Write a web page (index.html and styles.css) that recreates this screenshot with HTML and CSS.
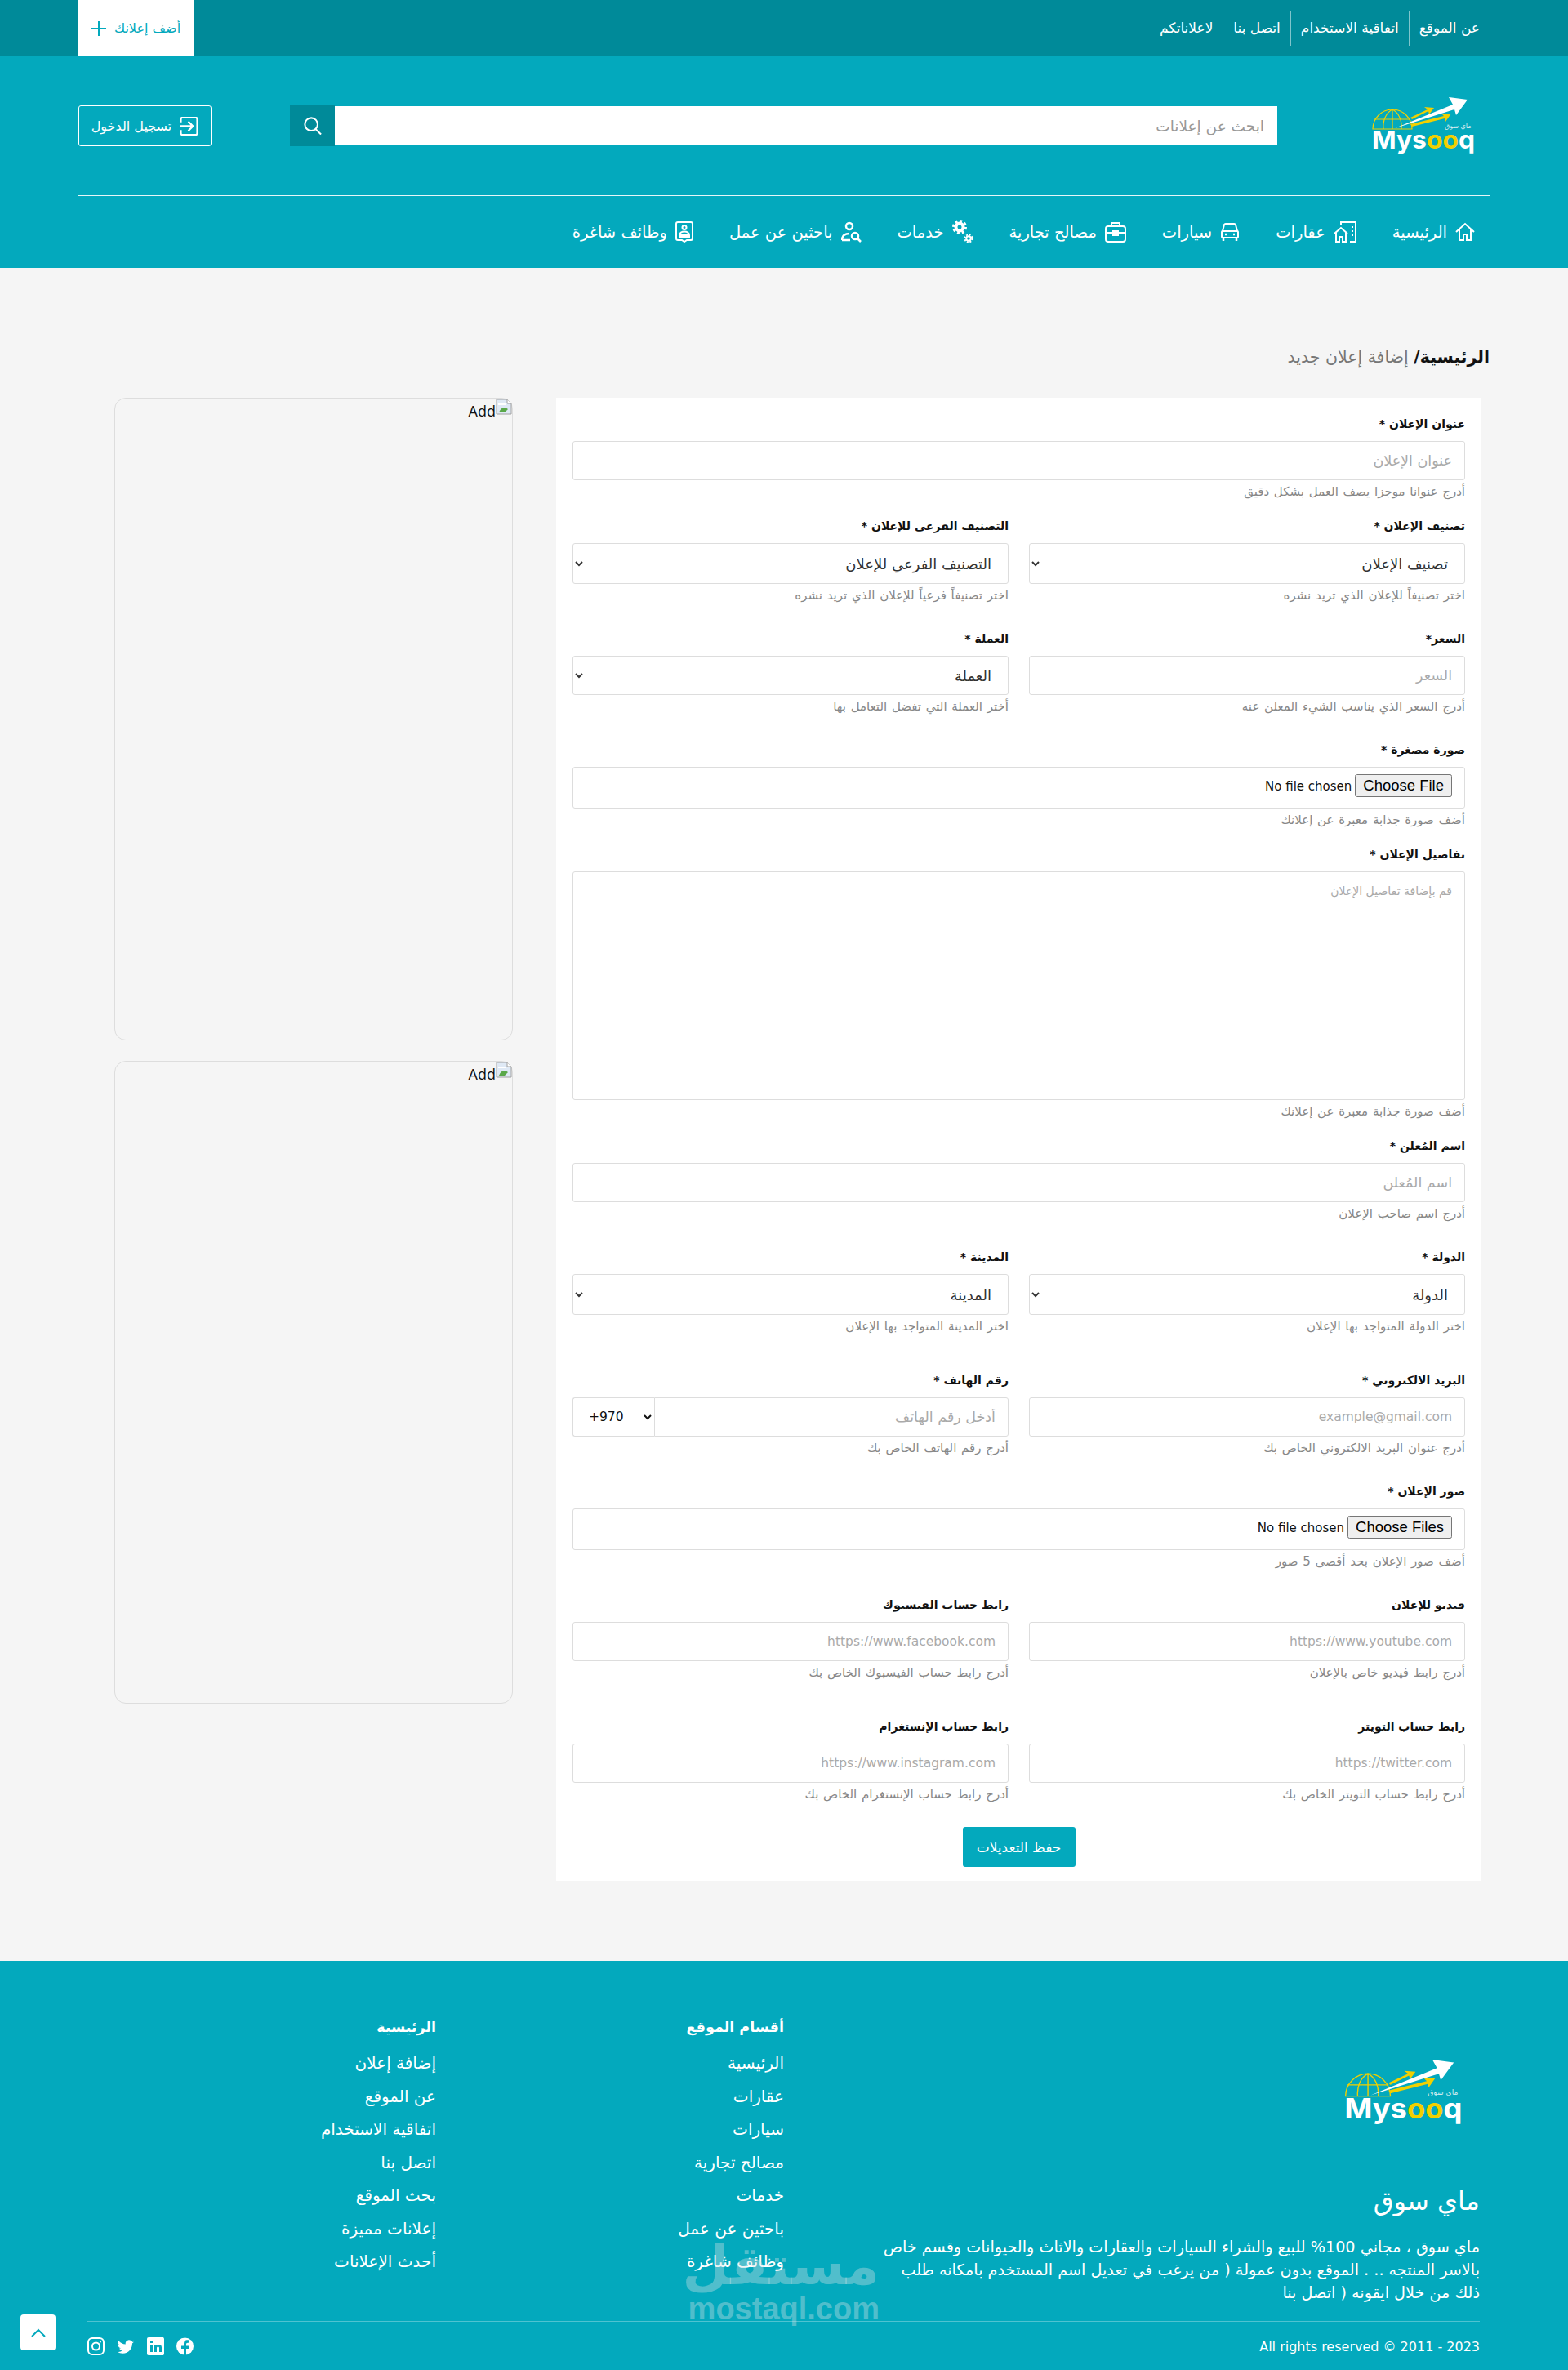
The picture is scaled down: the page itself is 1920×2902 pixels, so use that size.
FILE: index.html
```html
<!DOCTYPE html>
<html lang="ar" dir="rtl">
  <head>
    <meta charset="UTF-8" />
    <meta name="viewport" content="width=device-width, initial-scale=1.0" />
    <title>إضافة إعلان جديد - ماي سوق</title>
    <link rel="stylesheet" href="styles.css">
  </head>
  <body>
    <header class="site-header">
      <div class="top-bar">
        <div class="wrap top-bar-inner">
          <nav class="top-links">
            <a href="#">عن الموقع</a>
            <a href="#">اتفاقية الاستخدام</a>
            <a href="#">اتصل بنا</a>
            <a href="#">لاعلاناتكم</a>
          </nav>
          <a href="#" class="add-btn">
            أضف إعلانك
            <svg width="18" height="18" viewBox="0 0 18 18"><path d="M9 0v18M0 9h18" stroke="#03a9bd" stroke-width="2" /></svg>
          </a>
        </div>
      </div>

      <div class="wrap">
        <div class="header-main">
          <svg class="logo" width="126" height="70" viewBox="0 0 126 70">
            <g fill="none" stroke="#f2d000" stroke-width="1.2">
              <path d="M1 39a24 24 0 0 1 48 0z" />
              <path d="M25 15v24M14 39c-1-10 3-20 11-24 8 4 12 14 11 24M3 27h44" />
            </g>
            <polygon fill="#f2d000" points="47,25 68,15 64,12 76,13 70,21 69,17 49,27" />
            <polygon fill="#f2d000" points="47,33 88,23 85,20 97,20 90,30 89,26 49,36" />
            <polygon fill="#fff" points="28,38 99,9 94,0 117,3 103,22 101,15" />
            <text x="89" y="38" class="logo-ar">ماي سوق</text>
            <text x="0" y="63" class="logo-text" textLength="126" lengthAdjust="spacingAndGlyphs">Mys<tspan fill="#f2d000">oo</tspan>q</text>
          </svg>
          <form class="search">
            <input type="text" class="search-input" placeholder="ابحث عن إعلانات" />
            <button type="button" class="search-btn" aria-label="بحث">
              <svg width="22" height="22" viewBox="0 0 24 24" fill="none" stroke="#fff" stroke-width="2.200"><circle cx="10" cy="10" r="8.500" /><path d="M15.500 16 23 23.500" /></svg>
            </button>
          </form>
          <a href="#" class="login-btn">
            <svg width="23" height="23" viewBox="0 0 24 24" fill="none" stroke="#fff" stroke-width="2.400"><path d="M1.500 7V3a2 2 0 0 1 2-2h17a2 2 0 0 1 2 2v18a2 2 0 0 1-2 2h-17a2 2 0 0 1-2-2v-4" /><path d="M1 12h16M11 6l6 6-6 6" /></svg>
            تسجيل الدخول
          </a>
        </div>

        <nav class="main-nav">
          <a href="#">
            <svg width="24" height="24" viewBox="0 0 24 24" fill="none" stroke="#fff" stroke-width="2"><path d="M1 12 12 2l11 10" /><path d="M5 9v13h5v-7h4v7h5V9" /></svg>
            الرئيسية
          </a>
          <a href="#">
            <svg width="28" height="26" viewBox="0 0 28 26" fill="none" stroke="#fff" stroke-width="2"><path d="M1 15 9 8l8 7" /><path d="M3 13v12h4v-6h4v6h4V13" /><path d="M9 5V1h18v24h-7" /><path d="M22 7h2M22 12h2M22 17h2" /></svg>
            عقارات
          </a>
          <a href="#">
            <svg width="24" height="24" viewBox="0 0 24 24" fill="none" stroke="#fff" stroke-width="2"><path d="M3 11 5 3a2 2 0 0 1 2-1h10a2 2 0 0 1 2 1l2 8" /><rect x="2" y="11" width="20" height="8" rx="1" /><path d="M4 19v4M20 19v4M6 15h2M16 15h2" stroke-width="2.500" /></svg>
            سيارات
          </a>
          <a href="#">
            <svg width="26" height="26" viewBox="0 0 26 26" fill="none" stroke="#fff" stroke-width="2"><rect x="1" y="6" width="24" height="19" rx="3" /><path d="M8 6V2h10v4M1 14h9M16 14h9" /><rect x="10" y="12" width="6" height="5" fill="#fff" /></svg>
            مصالح تجارية
          </a>
          <a href="#">
            <svg width="26" height="30" viewBox="0 0 26 30" fill="none" stroke="#fff"><circle cx="9" cy="9" r="7.500" stroke-width="3" stroke-dasharray="3 2.890" /><circle cx="9" cy="9" r="4.500" stroke-width="4" /><circle cx="20" cy="23" r="4.500" stroke-width="2" stroke-dasharray="2 1.530" /><circle cx="20" cy="23" r="2.800" stroke-width="2" /></svg>
            خدمات
          </a>
          <a href="#">
            <svg width="25" height="26" viewBox="0 0 25 26" fill="none" stroke="#fff" stroke-width="2.500"><circle cx="10" cy="6" r="4" /><path d="M1 23c0-5 3-8 9-8M1 23h10" /><circle cx="17" cy="18" r="4" /><path d="m20 21 4 4" /></svg>
            باحثين عن عمل
          </a>
          <a href="#">
            <svg width="22" height="26" viewBox="0 0 22 26" fill="none" stroke="#fff" stroke-width="2"><path d="M3 1h16a2 2 0 0 1 2 2v18a2 2 0 0 1-2 2h-5l-3 2-3-2H3a2 2 0 0 1-2-2V3a2 2 0 0 1 2-2z" /><circle cx="11" cy="7.500" r="2.500" /><path d="M5 17c0-6 12-6 12 0zM4 19h14" /></svg>
            وظائف شاغرة
          </a>
        </nav>
      </div>
    </header>

    <main class="wrap page">
      <div class="breadcrumb"><b>الرئيسية/</b> إضافة إعلان جديد</div>

      <div class="page-cols">
        <form class="ad-form">
          <div class="form-row gap-s">
            <div class="field">
              <label>عنوان الإعلان *</label>
              <input type="text" class="control" placeholder="عنوان الإعلان" />
              <small>أدرج عنوانا موجزا يصف العمل بشكل دقيق</small>
            </div>
          </div>

          <div class="form-row cols gap-m">
            <div class="field">
              <label>تصنيف الإعلان *</label>
              <select class="control select"><option>تصنيف الإعلان</option></select>
              <small>اختر تصنيفاً للإعلان الذي تريد نشره</small>
            </div>
            <div class="field">
              <label>التصنيف الفرعي للإعلان *</label>
              <select class="control select"><option>التصنيف الفرعي للإعلان</option></select>
              <small>اختر تصنيفاً فرعياً للإعلان الذي تريد نشره</small>
            </div>
          </div>

          <div class="form-row cols gap-m">
            <div class="field">
              <label>السعر*</label>
              <input type="text" class="control" placeholder="السعر" />
              <small>أدرج السعر الذي يناسب الشيء المعلن عنه</small>
            </div>
            <div class="field">
              <label>العملة *</label>
              <select class="control select fit"><option>العملة</option></select>
              <small>أختر العملة التي تفضل التعامل بها</small>
            </div>
          </div>

          <div class="form-row gap-s">
            <div class="field">
              <label>صورة مصغرة *</label>
              <input type="file" class="control file" />
              <small>أضف صورة جذابة معبرة عن إعلانك</small>
            </div>
          </div>

          <div class="form-row gap-s">
            <div class="field">
              <label>تفاصيل الإعلان *</label>
              <textarea class="control details" placeholder="قم بإضافة تفاصيل الإعلان"></textarea>
              <small>أضف صورة جذابة معبرة عن إعلانك</small>
            </div>
          </div>

          <div class="form-row gap-m">
            <div class="field">
              <label>اسم المُعلن *</label>
              <input type="text" class="control" placeholder="اسم المُعلن" />
              <small>أدرج اسم صاحب الإعلان</small>
            </div>
          </div>

          <div class="form-row cols gap-l">
            <div class="field">
              <label>الدولة *</label>
              <select class="control select"><option>الدولة</option></select>
              <small>اختر الدولة المتواجد بها الإعلان</small>
            </div>
            <div class="field">
              <label>المدينة *</label>
              <select class="control select"><option>المدينة</option></select>
              <small>اختر المدينة المتواجد بها الإعلان</small>
            </div>
          </div>

          <div class="form-row cols gap-m">
            <div class="field">
              <label>البريد الالكتروني *</label>
              <input type="text" class="control latin" placeholder="example@gmail.com" />
              <small>أدرج عنوان البريد الالكتروني الخاص بك</small>
            </div>
            <div class="field">
              <label>رقم الهاتف *</label>
              <div class="phone">
                <input type="text" class="control" placeholder="أدخل رقم الهاتف" />
                <select class="control code latin" dir="ltr"><option dir="ltr">+970</option></select>
              </div>
              <small>أدرج رقم الهاتف الخاص بك</small>
            </div>
          </div>

          <div class="form-row gap-m">
            <div class="field">
              <label>صور الإعلان *</label>
              <input type="file" class="control file" multiple />
              <small>أضف صور الإعلان بحد أقصى 5 صور</small>
            </div>
          </div>

          <div class="form-row cols gap-l">
            <div class="field">
              <label>فيديو للإعلان</label>
              <input type="text" class="control latin" placeholder="https://www.youtube.com" />
              <small>أدرج رابط فيديو خاص بالإعلان</small>
            </div>
            <div class="field">
              <label>رابط حساب الفيسبوك</label>
              <input type="text" class="control latin" placeholder="https://www.facebook.com" />
              <small>أدرج رابط حساب الفيسبوك الخاص بك</small>
            </div>
          </div>

          <div class="form-row cols">
            <div class="field">
              <label>رابط حساب التويتر</label>
              <input type="text" class="control latin" placeholder="https://twitter.com" />
              <small>أدرج رابط حساب التويتر الخاص بك</small>
            </div>
            <div class="field">
              <label>رابط حساب الإنستغرام</label>
              <input type="text" class="control latin" placeholder="https://www.instagram.com" />
              <small>أدرج رابط حساب الإنستغرام الخاص بك</small>
            </div>
          </div>

          <div class="form-actions">
            <button type="button" class="save-btn">حفظ التعديلات</button>
          </div>
        </form>

        <aside class="side-ads">
          <div class="ad-box">
            <svg width="20" height="20" viewBox="0 0 20 20"><path d="M1 1h13l5 5v13H1z" fill="#dfe9f5" stroke="#a0a0a0" /><path d="M14 1v5h5" fill="#fff" stroke="#a0a0a0" /><path d="M4 17c2-6 7-8 11-4l-4 4z" fill="#5aa84a" /><path d="M3 6h9v2H3z" fill="#fff" /></svg>
            <span>Add</span>
          </div>
          <div class="ad-box">
            <svg width="20" height="20" viewBox="0 0 20 20"><path d="M1 1h13l5 5v13H1z" fill="#dfe9f5" stroke="#a0a0a0" /><path d="M14 1v5h5" fill="#fff" stroke="#a0a0a0" /><path d="M4 17c2-6 7-8 11-4l-4 4z" fill="#5aa84a" /><path d="M3 6h9v2H3z" fill="#fff" /></svg>
            <span>Add</span>
          </div>
        </aside>
      </div>
    </main>

    <footer class="site-footer">
      <div class="footer-top">
        <div class="footer-brand">
          <svg class="footer-logo" width="147" height="80" viewBox="0 0 126 70">
            <g fill="none" stroke="#f2d000" stroke-width="1.2">
              <path d="M1 39a24 24 0 0 1 48 0z" />
              <path d="M25 15v24M14 39c-1-10 3-20 11-24 8 4 12 14 11 24M3 27h44" />
            </g>
            <polygon fill="#f2d000" points="47,25 68,15 64,12 76,13 70,21 69,17 49,27" />
            <polygon fill="#f2d000" points="47,33 88,23 85,20 97,20 90,30 89,26 49,36" />
            <polygon fill="#fff" points="28,38 99,9 94,0 117,3 103,22 101,15" />
            <text x="89" y="38" class="logo-ar">ماي سوق</text>
            <text x="0" y="63" class="logo-text" textLength="126" lengthAdjust="spacingAndGlyphs">Mys<tspan fill="#f2d000">oo</tspan>q</text>
          </svg>
          <h2>ماي سوق</h2>
          <p>ماي سوق ، مجاني 100% للبيع والشراء السيارات والعقارات والاثاث والحيوانات وقسم خاص بالاسر المنتجه .. . الموقع بدون عمولة ( من يرغب في تعديل اسم المستخدم بامكانه طلب ذلك من خلال ايقونه ( اتصل بنا</p>
        </div>
        <div class="footer-col">
          <h3>أقسام الموقع</h3>
          <a href="#">الرئيسية</a>
          <a href="#">عقارات</a>
          <a href="#">سيارات</a>
          <a href="#">مصالح تجارية</a>
          <a href="#">خدمات</a>
          <a href="#">باحثين عن عمل</a>
          <a href="#">وظائف شاغرة</a>
        </div>
        <div class="footer-col">
          <h3>الرئيسية</h3>
          <a href="#">إضافة إعلان</a>
          <a href="#">عن الموقع</a>
          <a href="#">اتفاقية الاستخدام</a>
          <a href="#">اتصل بنا</a>
          <a href="#">بحث الموقع</a>
          <a href="#">إعلانات مميزة</a>
          <a href="#">أحدث الإعلانات</a>
        </div>
      </div>

      <div class="footer-bottom">
        <span class="copyright" dir="ltr">All rights reserved © 2011 - 2023</span>
        <div class="socials" dir="ltr">
          <a href="#" aria-label="instagram"><svg width="21" height="22" viewBox="0 0 21 22" fill="none" stroke="#fff" stroke-width="2"><rect x="1" y="1" width="19" height="20" rx="5" /><circle cx="10.500" cy="11" r="4.500" /><circle cx="16" cy="5.500" r="1" fill="#fff" stroke="none" /></svg></a>
          <a href="#" aria-label="twitter"><svg width="24" height="22" viewBox="0 0 24 24" fill="#fff"><path d="M23 5.900c-.8.400-1.700.600-2.600.700a4.500 4.500 0 0 0 2-2.500c-.9.500-1.800.900-2.900 1.100a4.500 4.500 0 0 0-7.700 4.100A12.800 12.800 0 0 1 2.500 4.600a4.500 4.500 0 0 0 1.400 6 4.500 4.500 0 0 1-2-.6v.1a4.500 4.500 0 0 0 3.600 4.400 4.500 4.500 0 0 1-2 .1 4.500 4.500 0 0 0 4.200 3.100A9 9 0 0 1 1 19.500a12.700 12.700 0 0 0 6.900 2c8.300 0 12.800-6.900 12.800-12.800v-.6c.9-.6 1.600-1.400 2.300-2.200z" /></svg></a>
          <a href="#" aria-label="linkedin"><svg width="21" height="22" viewBox="0 0 21 22"><rect width="21" height="22" rx="2" fill="#fff" /><path d="M4 9h3v9H4zM4 4h3v3H4zM9 9h3v1.500c1-2 6-2.500 6 2V18h-3v-5c0-2-3-2-3 0v5H9z" fill="#03a9bd" /></svg></a>
          <a href="#" aria-label="facebook"><svg width="23" height="22" viewBox="0 0 23 22"><circle cx="11.500" cy="11" r="10.500" fill="#fff" /><path d="M13 22v-8h3l.5-3.500H13V8.500c0-1 .5-1.800 2-1.800h1.600V3.600C14 3 10 3 10 8v2.500H7V14h3v8z" fill="#03a9bd" /></svg></a>
        </div>
      </div>

      <a href="#" class="back-top" aria-label="top">
        <svg width="18" height="11" viewBox="0 0 18 11" fill="none" stroke="#03a9bd" stroke-width="2"><path d="M1 10 9 2l8 8" /></svg>
      </a>

      <div class="watermark">
        <span class="watermark-ar">مستقل</span>
        <span class="watermark-en">mostaql.com</span>
      </div>
    </footer>
  </body>
</html>
```

FILE: styles.css
```css
* {
  box-sizing: border-box;
}

body {
  margin: 0;
  background-color: #f5f5f5;
  color: #111;
  font-family: "DejaVu Sans", "Noto Sans", sans-serif;
  font-size: 14px;
}

a {
  color: inherit;
  text-decoration: none;
}

.logo-text {
  font-family: "Inter", "Liberation Sans", sans-serif;
  font-size: 30px;
  font-weight: 700;
  fill: #fff;
  direction: ltr;
}

.logo-ar {
  font-size: 8px;
  fill: #d8eef2;
  direction: ltr;
}

.wrap {
  width: 1728px;
  margin: 0 auto;
}

/* header */
.site-header {
  background-color: #03a9bd;
  color: #fff;
}

.top-bar {
  background-color: #008a99;
  height: 69px;
}

.top-bar-inner {
  display: flex;
  justify-content: space-between;
  align-items: center;
  height: 69px;
}

.top-links {
  display: flex;
}

.top-links a {
  padding: 0 12px;
  height: 43px;
  line-height: 43px;
  font-size: 17px;
  border-left: 1px solid rgba(255, 255, 255, 0.5);
}

.top-links a:last-child {
  border-left: none;
}

.add-btn {
  display: flex;
  align-items: center;
  justify-content: center;
  gap: 10px;
  width: 141px;
  height: 69px;
  background-color: #fff;
  color: #03a9bd;
  font-size: 16px;
}

.header-main {
  display: flex;
  align-items: center;
  height: 171px;
  border-bottom: 1px solid #e6f6f8;
}

.logo {
  flex: none;
  margin-right: 18px;
}

.search {
  display: flex;
  flex: 1;
  align-items: center;
  margin: 0 116px 0 96px;
}

.search-input {
  flex: 1;
  height: 48px;
  border: none;
  border-radius: 0;
  padding: 0 16px;
  font-family: inherit;
  font-size: 18.500px;
  background-color: #fff;
}

.search-input::placeholder {
  color: #999;
}

.search-btn {
  display: flex;
  align-items: center;
  justify-content: center;
  width: 55px;
  height: 50px;
  border: none;
  background-color: #008a99;
}

.login-btn {
  display: flex;
  align-items: center;
  justify-content: center;
  gap: 10px;
  width: 163px;
  height: 50px;
  border: 1px solid #fff;
  border-radius: 3px;
  font-size: 16px;
}

.main-nav {
  display: flex;
  align-items: center;
  gap: 44px;
  height: 88px;
  padding-right: 18px;
}

.main-nav a {
  display: flex;
  align-items: center;
  gap: 10px;
  font-size: 19.500px;
}

/* page */
.page {
  padding-bottom: 98px;
}

.breadcrumb {
  height: 159px;
  padding-top: 95px;
  line-height: 28px;
  font-size: 20.500px;
  color: #777;
}

.breadcrumb b {
  color: #111;
}

.page-cols {
  display: flex;
  align-items: flex-start;
  gap: 53px;
  padding: 0 10px;
}

.ad-form {
  width: 1133px;
  flex: none;
  padding: 21px 20px 17px;
  background-color: #fff;
}

.form-row {
  display: block;
}

.form-row.cols {
  display: grid;
  grid-template-columns: 1fr 1fr;
  column-gap: 25px;
}

.gap-s {
  margin-bottom: 21px;
}

.gap-m {
  margin-bottom: 32px;
}

.gap-l {
  margin-bottom: 45px;
}

.field label {
  display: block;
  height: 22px;
  line-height: 22px;
  margin-bottom: 10px;
  font-size: 14px;
  font-weight: 700;
}

.field small {
  display: block;
  height: 20px;
  line-height: 20px;
  margin-top: 4px;
  font-size: 15px;
  word-spacing: 1px;
  color: #888;
}

.control {
  display: block;
  width: 100%;
  height: 48px;
  padding: 0 15px;
  border: 1px solid #ddd;
  border-radius: 3px;
  background-color: #fff;
  color: #111;
  font-family: inherit;
  font-size: 17.500px;
}

.control::placeholder {
  color: #aaa;
}

.latin {
  font-size: 15.500px;
}

.select {
  height: 50px;
  padding: 0 16px 0 0;
  color: #333;
  font-size: 18px;
}

.select.fit {
  height: 48px;
}

.file {
  height: 51px;
  padding: 8px 15px;
  font-size: 15px;
}

.file::file-selector-button {
  padding: 1px 8px;
  font-family: "Liberation Sans", sans-serif;
  font-size: 18.500px;
}

.details {
  height: 280px;
  padding-top: 15px;
  font-size: 14px;
  resize: none;
}

.phone {
  display: flex;
}

.phone .control {
  flex: 1;
  min-width: 0;
  border-radius: 0 3px 3px 0;
}

.phone .code {
  flex: none;
  width: 100px;
  border-right: none;
  border-radius: 3px 0 0 3px;
  direction: ltr;
  font-size: 15.500px;
}

.form-actions {
  display: flex;
  justify-content: center;
  margin-top: 30px;
}

.save-btn {
  width: 138px;
  height: 49px;
  border: none;
  border-radius: 3px;
  background-color: #03a9bd;
  color: #fff;
  font-family: inherit;
  font-size: 17px;
}

.side-ads {
  display: flex;
  flex-direction: column;
  gap: 25px;
  width: 488px;
  flex: none;
}

.ad-box {
  display: flex;
  align-items: flex-start;
  height: 787px;
  border: 1px solid #ddd;
  border-radius: 14px;
  font-family: "Open Sans", sans-serif;
  font-size: 18px;
}

.ad-box span {
  line-height: 24px;
  margin-top: 3px;
}

/* footer */
.site-footer {
  position: relative;
  height: 501px;
  padding: 0 108px 0 107px;
  background-color: #03a9bd;
  color: #fff;
}

.footer-top {
  display: flex;
  padding-top: 66px;
  border-bottom: 1px solid rgba(255, 255, 255, 0.3);
}

.footer-brand {
  width: 740px;
  padding-bottom: 20px;
  flex: none;
}

.footer-logo {
  display: block;
  margin: 55px 20px 73px 0;
}

.footer-brand h2 {
  margin: 0 0 23px;
  line-height: 40px;
  font-size: 32px;
  font-weight: 400;
}

.footer-brand p {
  margin: 0;
  line-height: 28px;
  font-size: 19.200px;
}

.footer-col {
  display: flex;
  flex-direction: column;
  margin-right: 112px;
  width: 314px;
  flex: none;
}

.footer-col h3 {
  margin: 0 0 9px;
  line-height: 30px;
  font-size: 17.500px;
  font-weight: 700;
}

.footer-col a {
  line-height: 40.500px;
  font-size: 20px;
}

.footer-bottom {
  display: flex;
  align-items: center;
  justify-content: space-between;
  height: 60px;
}

.copyright {
  font-size: 16px;
}

.socials {
  display: flex;
  align-items: center;
  gap: 14px;
}

.socials a {
  display: flex;
}

.back-top {
  position: absolute;
  left: 25px;
  bottom: 24px;
  display: flex;
  align-items: center;
  justify-content: center;
  width: 43px;
  height: 44px;
  border-radius: 4px;
  background-color: #fff;
}

.watermark {
  position: absolute;
  left: 845px;
  bottom: 56px;
  display: flex;
  flex-direction: column;
  width: 232px;
  color: rgba(210, 225, 230, 0.38);
  font-family: "Liberation Sans", sans-serif;
  font-weight: 700;
  text-align: center;
}

.watermark-ar {
  line-height: 66px;
  font-family: "DejaVu Sans", sans-serif;
  font-size: 66px;
}

.watermark-en {
  line-height: 38px;
  font-size: 38px;
}
```
